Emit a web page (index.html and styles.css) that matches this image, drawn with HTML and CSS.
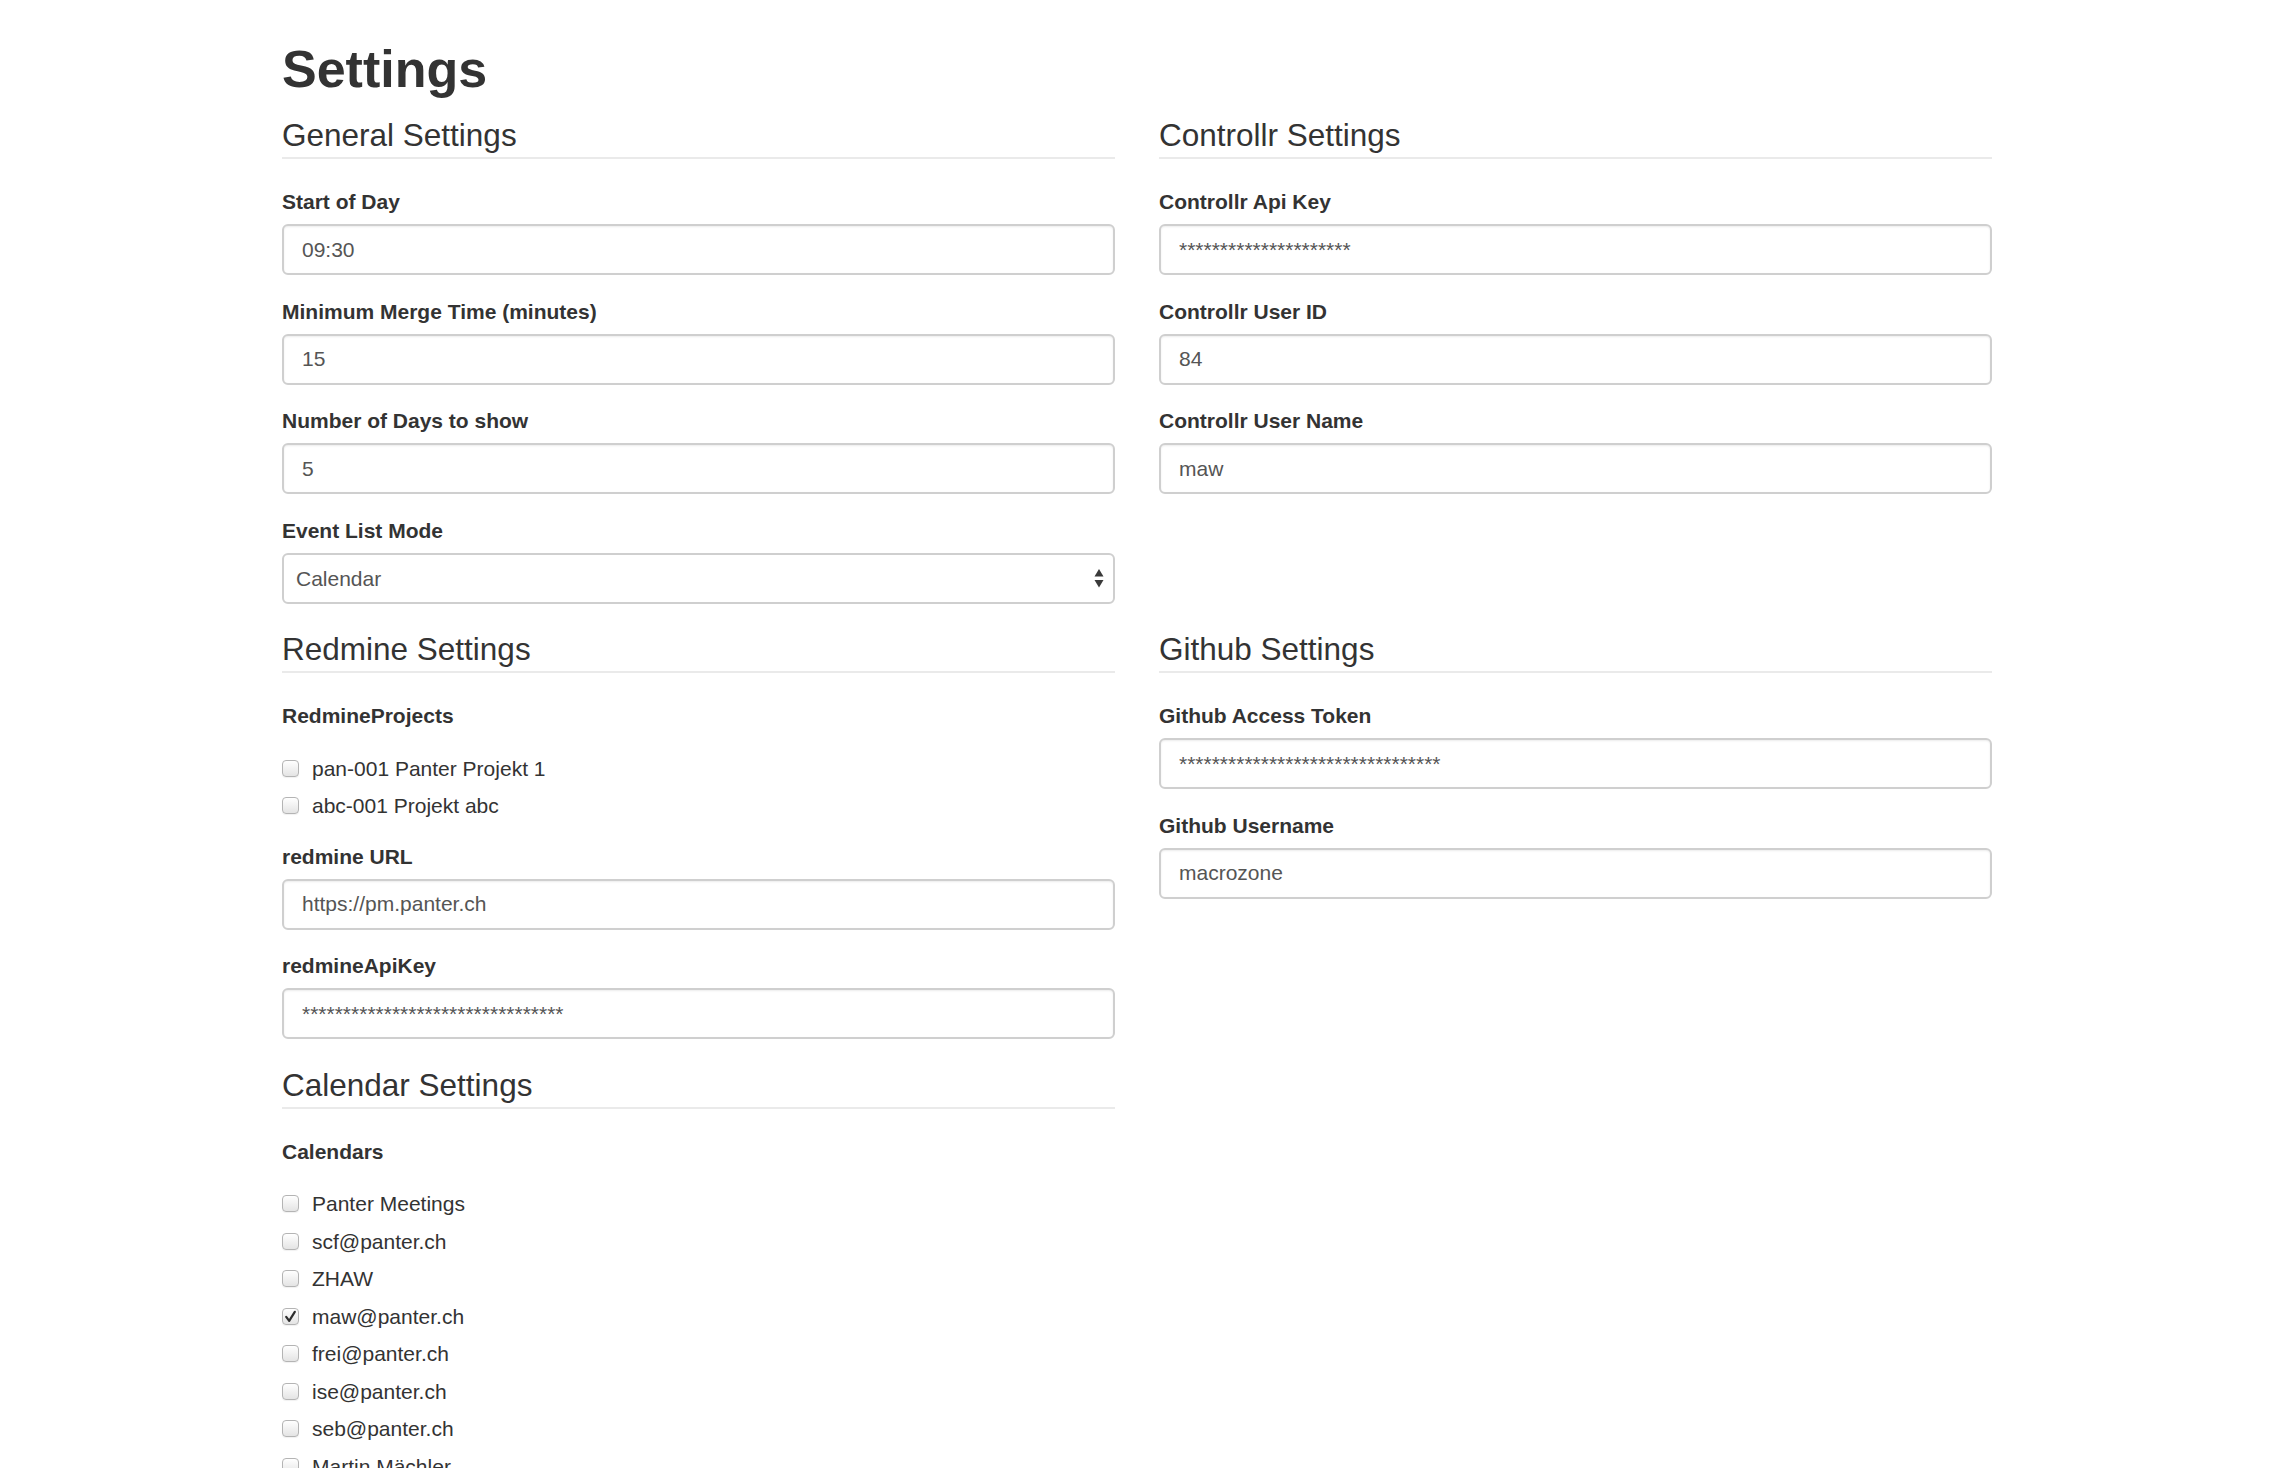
FILE: index.html
```html
<!DOCTYPE html>
<html lang="en">
<head>
<meta charset="utf-8">
<title>Settings</title>
<link rel="stylesheet" href="styles.css">
</head>
<body>
<div class="container">
  <h1 class="page-title">Settings</h1>

  <div class="row">
    <section class="col">
      <h3 class="section-title">General Settings</h3>
      <div class="form-group">
        <label class="form-label">Start of Day</label>
        <input class="form-control" type="text" value="09:30">
      </div>
      <div class="form-group">
        <label class="form-label">Minimum Merge Time (minutes)</label>
        <input class="form-control" type="text" value="15">
      </div>
      <div class="form-group">
        <label class="form-label">Number of Days to show</label>
        <input class="form-control" type="text" value="5">
      </div>
      <div class="form-group">
        <label class="form-label">Event List Mode</label>
        <div class="select-wrap">
          <select class="form-control form-select">
            <option>Calendar</option>
            <option>List</option>
          </select>
          <svg class="select-arrows" width="10" height="20" viewBox="0 0 10 20" aria-hidden="true">
            <path d="M5 1 L9.5 8.5 L0.5 8.5 Z" fill="#3a3a3a"/>
            <path d="M0.5 12 L9.5 12 L5 19.5 Z" fill="#3a3a3a"/>
          </svg>
        </div>
      </div>
    </section>

    <section class="col">
      <h3 class="section-title">Controllr Settings</h3>
      <div class="form-group">
        <label class="form-label">Controllr Api Key</label>
        <input class="form-control" type="text" value="*********************">
      </div>
      <div class="form-group">
        <label class="form-label">Controllr User ID</label>
        <input class="form-control" type="text" value="84">
      </div>
      <div class="form-group">
        <label class="form-label">Controllr User Name</label>
        <input class="form-control" type="text" value="maw">
      </div>
    </section>
  </div>

  <div class="row">
    <section class="col">
      <h3 class="section-title">Redmine Settings</h3>
      <div class="form-group">
        <label class="form-label">RedmineProjects</label>
        <div class="checks">
          <label class="check"><span class="cb"></span>pan-001 Panter Projekt 1</label>
          <label class="check"><span class="cb"></span>abc-001 Projekt abc</label>
        </div>
      </div>
      <div class="form-group">
        <label class="form-label">redmine URL</label>
        <input class="form-control" type="text" value="https://pm.panter.ch">
      </div>
      <div class="form-group">
        <label class="form-label">redmineApiKey</label>
        <input class="form-control" type="text" value="********************************">
      </div>
    </section>

    <section class="col">
      <h3 class="section-title">Github Settings</h3>
      <div class="form-group">
        <label class="form-label">Github Access Token</label>
        <input class="form-control" type="text" value="********************************">
      </div>
      <div class="form-group">
        <label class="form-label">Github Username</label>
        <input class="form-control" type="text" value="macrozone">
      </div>
    </section>
  </div>

  <div class="row">
    <section class="col">
      <h3 class="section-title">Calendar Settings</h3>
      <div class="form-group">
        <label class="form-label">Calendars</label>
        <div class="checks">
          <label class="check"><span class="cb"></span>Panter Meetings</label>
          <label class="check"><span class="cb"></span>scf@panter.ch</label>
          <label class="check"><span class="cb"></span>ZHAW</label>
          <label class="check"><span class="cb checked"><svg width="17" height="17" viewBox="0 0 17 17" aria-hidden="true"><path d="M4.2 8.8 L7.2 12.8 L12.8 3.8" fill="none" stroke="#2e2e2e" stroke-width="2.2" stroke-linecap="round" stroke-linejoin="round"/></svg></span>maw@panter.ch</label>
          <label class="check"><span class="cb"></span>frei@panter.ch</label>
          <label class="check"><span class="cb"></span>ise@panter.ch</label>
          <label class="check"><span class="cb"></span>seb@panter.ch</label>
          <label class="check"><span class="cb"></span>Martin Mächler</label>
        </div>
      </div>
    </section>
    <section class="col"></section>
  </div>
</div>
</body>
</html>
```
FILE: styles.css
```css
html, body {
  margin: 0;
  padding: 0;
  background: #ffffff;
}

body {
  font-family: "Liberation Sans", Arial, Helvetica, sans-serif;
  color: #333333;
  font-size: 21px;
}

.container {
  width: 1710px;
  margin: 0 auto;
}

.page-title {
  font-size: 52px;
  font-weight: 700;
  line-height: 57px;
  margin: 41px 0 13px;
  color: #333333;
}

.row {
  display: grid;
  grid-template-columns: 1fr 1fr;
  column-gap: 44px;
  align-items: start;
}

.col {
  min-width: 0;
}

.section-title {
  font-size: 31.5px;
  font-weight: 400;
  line-height: 38px;
  margin: 5px 0 28px;
  padding-bottom: 3px;
  border-bottom: 2px solid #eaeaea;
  color: #333333;
}

.form-group {
  margin-bottom: 21.5px;
}

.form-label {
  display: block;
  font-size: 21px;
  font-weight: 700;
  line-height: 29px;
  margin-bottom: 8px;
}

.form-control {
  display: block;
  box-sizing: border-box;
  width: 100%;
  height: 51px;
  margin: 0;
  padding: 0 18px;
  font-family: "Liberation Sans", Arial, Helvetica, sans-serif;
  font-size: 21px;
  color: #555555;
  background: #ffffff;
  border: 2px solid #cfcfcf;
  border-radius: 6px;
  box-shadow: inset 0 1px 2px rgba(0, 0, 0, 0.08);
  outline: none;
}

.select-wrap {
  position: relative;
}

.form-select {
  -webkit-appearance: none;
  appearance: none;
  padding: 0 40px 0 12px;
  box-shadow: none;
}

.select-arrows {
  position: absolute;
  right: 11px;
  top: 15.5px;
  pointer-events: none;
}

.checks {
  padding-top: 15.5px;
}

.check {
  display: flex;
  align-items: center;
  height: 29px;
  margin-bottom: 8.5px;
  font-size: 21px;
  line-height: 29px;
  color: #333333;
}

.check:last-child {
  margin-bottom: 2px;
}

.cb {
  flex: none;
  box-sizing: border-box;
  width: 17px;
  height: 17px;
  margin-right: 13px;
  border: 1px solid #b4b4b4;
  border-radius: 4px;
  background: linear-gradient(#ffffff, #e4e4e4);
  box-shadow: 0 1px 1px rgba(0, 0, 0, 0.06);
  position: relative;
}

.cb svg {
  position: absolute;
  left: -1px;
  top: -1px;
}
```
